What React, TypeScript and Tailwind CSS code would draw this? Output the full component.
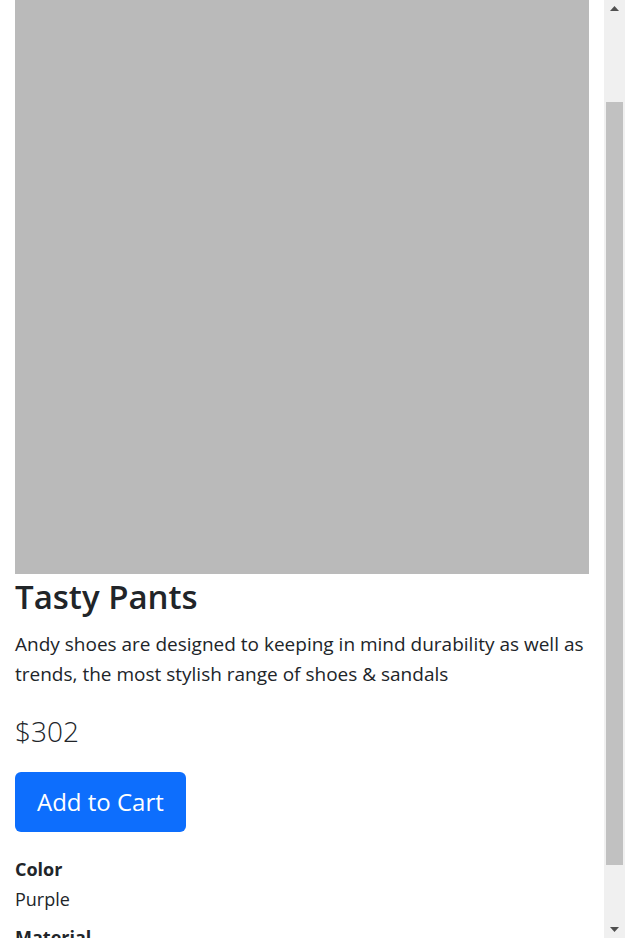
export default function App() {
  return (
    <div className="flex h-[938px] w-[625px] overflow-hidden bg-white text-[#212529]" style={{ fontFamily: '"Open Sans", "Noto Sans", sans-serif' }}>
      <main className="flex-1 overflow-hidden px-[15px]">
        <div className="h-[574px] w-full bg-[#bababa]" />
        <h1 className="mt-[3px] text-[33px] font-semibold leading-[1.2]">Tasty Pants</h1>
        <p className="mt-[12px] text-[19px] leading-[30px]">
          Andy shoes are designed to keeping in mind durability as well as trends, the most stylish range of shoes &amp; sandals
        </p>
        <div className="mt-[26px] text-[28px] font-light leading-[1.2]">$302</div>
        <button className="mt-[24px] h-[60px] rounded-[6px] bg-[#0d6efd] px-[22px] text-[24px] text-white">Add to Cart</button>
        <dl className="mt-[22px] text-[18px] leading-[30px]">
          <dt className="font-bold">Color</dt>
          <dd>Purple</dd>
          <dt className="mt-[8px] font-bold">Material</dt>
          <dd>Cotton</dd>
        </dl>
      </main>
      <div className="flex w-[21px] flex-col bg-[#f0f0f0]">
        <div className="flex h-[17px] items-center justify-center">
          <svg width="9" height="5" viewBox="0 0 9 5"><path d="M0 5 L4.5 0 L9 5 Z" fill="#505050" /></svg>
        </div>
        <div className="mx-[2px] mt-[85px] h-[763px] bg-[#c1c1c1]" />
        <div className="flex-1" />
        <div className="flex h-[17px] items-center justify-center">
          <svg width="9" height="5" viewBox="0 0 9 5"><path d="M0 0 L9 0 L4.5 5 Z" fill="#505050" /></svg>
        </div>
      </div>
    </div>
  );
}
